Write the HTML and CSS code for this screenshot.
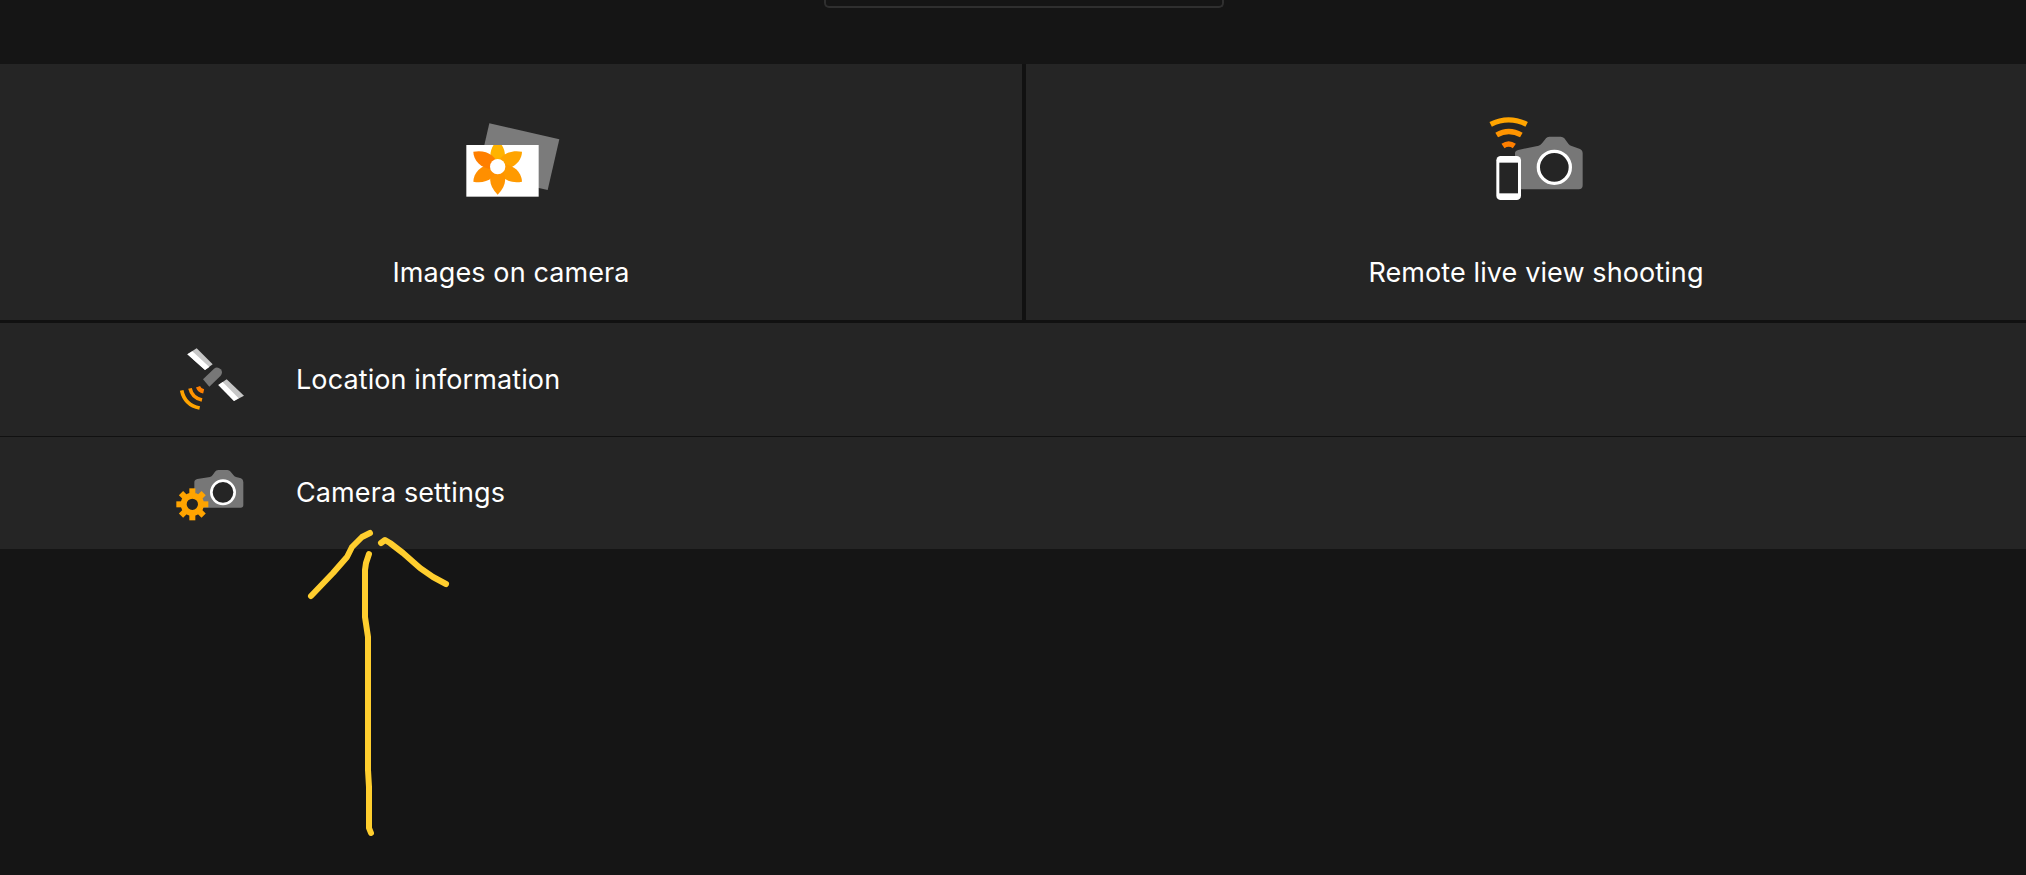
FILE: index.html
```html
<!DOCTYPE html>
<html lang="en">
<head>
    <meta charset="UTF-8">
    <meta name="viewport" content="width=device-width, initial-scale=1.0">
    <title>Camera Connect</title>
    <link rel="stylesheet" href="styles.css">
</head>
<body>
    <div class="top-bar">
        <div class="top-box"></div>
    </div>

    <div class="cards">
        <div class="card">
            <svg class="card-icon" viewBox="-12 0 510 360">
                <polygon points="178,70 388,118 353,270 143,222" fill="#7b7b7b"/>
                <rect x="109" y="135" width="217" height="155" fill="#fff"/>
                <clipPath id="photoClip"><rect x="109" y="135" width="217" height="155"/></clipPath>
                <g clip-path="url(#photoClip)">
                    <path d="M203 205 C172 178 176 150 203 118 C230 150 234 178 203 205" fill="#ffb300"/>
                    <path d="M198 205 C206 165 238 148 276 155 C276 182 248 216 198 205" fill="#ffa400"/>
                    <path d="M198 195 C248 184 276 218 276 245 C238 252 206 235 198 195" fill="#ff9a00"/>
                    <path d="M203 195 C234 222 232 256 203 284 C174 256 172 222 203 195" fill="#ff9400"/>
                    <path d="M208 195 C158 184 130 218 130 245 C168 252 200 235 208 195" fill="#ff8f00"/>
                    <path d="M208 205 C200 165 168 148 130 155 C130 182 158 216 208 205" fill="#ff7f00"/>
                    <circle cx="203" cy="200" r="23" fill="#fff"/>
                </g>
            </svg>
            <div class="card-label">Images on camera</div>
        </div>
        <div class="card card-right">
            <svg class="card-icon" viewBox="-27 0 510 360">
                <path d="M165 160 Q165 152 175 150 L236 137 Q242 135 246 130 L258 115 Q261 110 268 110 L302 110 Q309 110 313 115 L325 131 Q329 136 335 138 L358 146 Q368 149 368 160 L368 256 Q368 268 356 268 L165 268 Z" fill="#777"/>
                <circle cx="283" cy="202" r="48" fill="#252525" stroke="#fff" stroke-width="10"/>
                <rect x="109" y="168" width="74" height="132" rx="13" fill="#fff"/>
                <rect x="118" y="188" width="56" height="92" fill="#252525"/>
                <path d="M92 73 Q146 46 200 73" fill="none" stroke="#ffa400" stroke-width="16"/>
                <path d="M110 105 Q146 84 184 105" fill="none" stroke="#ff9400" stroke-width="16"/>
                <path d="M129 138 Q146 126 163 138" fill="none" stroke="#ff7f00" stroke-width="16"/>
            </svg>
            <div class="card-label">Remote live view shooting</div>
        </div>
    </div>

    <div class="rows">
        <div class="row">
            <svg class="row-icon" viewBox="0 12 330 240">
                <polygon points="110,40 158,88 135,105 82,58" fill="#c6c6c6"/>
                <polygon points="82,58 97,49 148,96 135,105" fill="#fff"/>
                <polygon points="200,133 252,182 222,198 175,150" fill="#c6c6c6"/>
                <polygon points="175,150 188,141 236,190 222,198" fill="#fff"/>
                <path d="M129 133 L162 101 Q172 93 182 103 Q190 112 182 122 L148 155 Z" fill="#777"/>
                <path d="M114 155 Q118 166 131 169" fill="none" stroke="#ff7f00" stroke-width="13"/>
                <path d="M90 160 Q96 188 126 195" fill="none" stroke="#ff9400" stroke-width="11"/>
                <path d="M65 166 Q74 210 119 219" fill="none" stroke="#ffa400" stroke-width="11"/>
            </svg>
            <div class="row-label">Location information</div>
        </div>
        <div class="row">
            <svg class="row-icon" viewBox="0 -6 330 240">
                <path d="M103 82 Q103 74 112 72 L150 66 Q155 65 158 60 L165 50 Q168 45 175 45 L202 45 Q208 45 212 50 L220 60 Q223 64 228 66 L243 70 Q250 73 250 82 L250 150 Q250 158 242 158 L130 158 L103 110 Z" fill="#777"/>
                <circle cx="189" cy="112" r="35" fill="#252525" stroke="#fff" stroke-width="8"/>
                <g transform="translate(97 148)">
                    <rect x="-9" y="-48" width="18" height="96" fill="#ffa400"/>
                    <rect x="-9" y="-48" width="18" height="96" fill="#ffa400" transform="rotate(45)"/>
                    <rect x="-9" y="-48" width="18" height="96" fill="#ffa400" transform="rotate(90)"/>
                    <rect x="-9" y="-48" width="18" height="96" fill="#ffa400" transform="rotate(135)"/>
                    <circle r="26" fill="#252525" stroke="#ffa400" stroke-width="18"/>
                </g>
            </svg>
            <div class="row-label">Camera settings</div>
        </div>
    </div>

    <!-- hand drawn arrow on top of the screenshot -->
    <svg class="scribble" viewBox="0 0 2026 875">
        <path d="M370 533 L362 537 L352 547 L347 557 L333 573 L311 596"/>
        <path d="M381 543 L385 540 L390 543 L403 553 L420 568 L433 577 L446 584"/>
        <path d="M369 554 L366 563 L365 570 L365 617 L368 637 L368 770 L369 787 L369 828 L371 833"/>
    </svg>
</body>
</html>
```

FILE: styles.css
```css
body {
    font-family: 'Inter', sans-serif;
    background-color: #151515;
    margin: 0;
    padding: 0;
    height: 875px;
    overflow: hidden;
    position: relative;
    color: #fff;
}
.top-bar {
    height: 64px;
}
.top-box {
    width: 400px;
    height: 8px;
    margin-left: 824px;
    border: 2px solid #2f2f2f;
    border-top: none;
    border-radius: 0 0 5px 5px;
    box-sizing: border-box;
}
.cards {
    display: grid;
    grid-template-columns: 1022px 1fr;
    column-gap: 4px;
    background-color: #111;
    padding-bottom: 3px;
}
.card {
    height: 256px;
    background-color: #252525;
    display: flex;
    flex-direction: column;
    align-items: center;
    padding-top: 36px;
    box-sizing: border-box;
}
.card-right {
    padding-left: 20px;
}
.card-icon {
    width: 170px;
    height: 120px;
}
.card-label {
    margin-top: 36px;
    font-size: 27px;
    line-height: 33px;
    letter-spacing: 0.1px;
}
.rows {
    display: flex;
    flex-direction: column;
    gap: 1px;
    background-color: #111;
}
.row {
    height: 112.5px;
    background-color: #252525;
    display: flex;
    align-items: center;
    gap: 26px;
    padding-left: 160px;
}
.row-icon {
    width: 110px;
    height: 80px;
}
.row-label {
    font-size: 27px;
    line-height: 33px;
    letter-spacing: 0.1px;
}
.scribble {
    position: absolute;
    left: 0;
    top: 0;
    width: 2026px;
    height: 875px;
    fill: none;
    stroke: #ffce2e;
    stroke-width: 6;
    stroke-linecap: round;
    stroke-linejoin: round;
}
```
